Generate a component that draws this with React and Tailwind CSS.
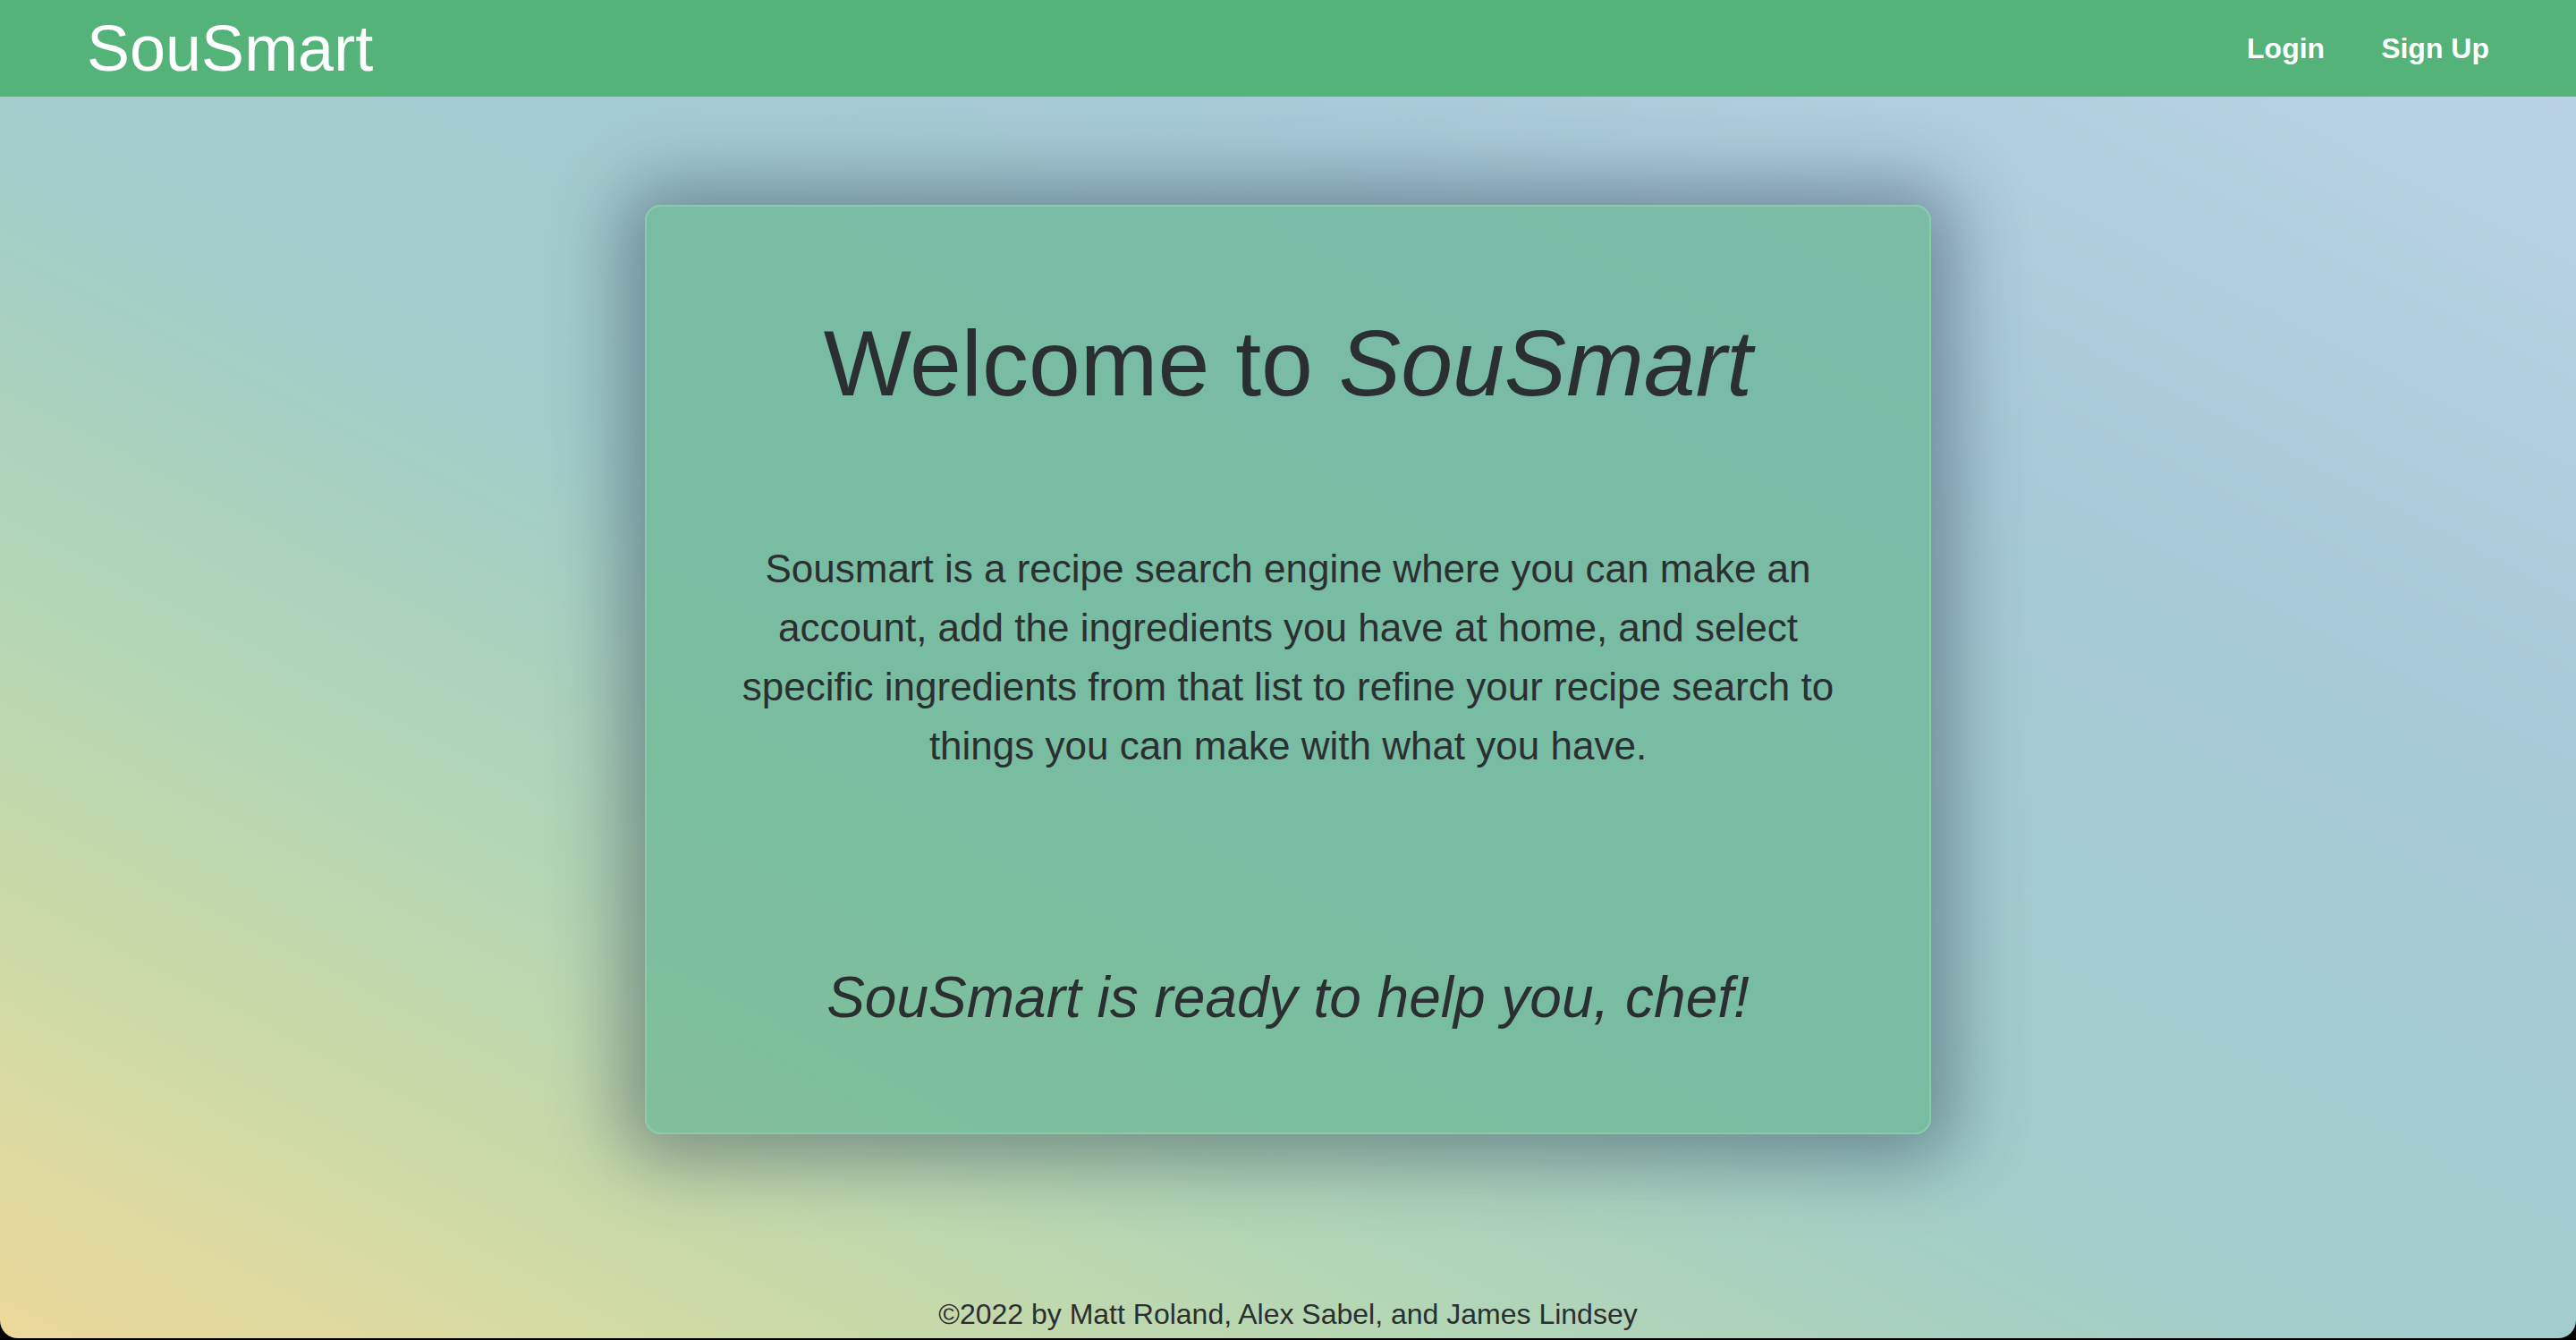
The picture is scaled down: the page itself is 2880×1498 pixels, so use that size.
export default function App() {
  return (
    <div className="h-[1498px] bg-black font-['Liberation_Sans',Arial,sans-serif]">
      <div className="flex h-[1496px] flex-col overflow-hidden rounded-b-[20px] bg-[linear-gradient(to_top_right,#edd89b_0%,#d3dba3_12%,#b3d6b4_28%,#a2cdca_45%,#a7c9d8_70%,#bbd4e7_100%)]">
        {/* Navbar */}
        <nav className="flex h-[108px] shrink-0 items-center justify-between bg-[#53b379] pl-[97px] pr-[97px]">
          <a className="text-[72px] leading-[72px] text-white">SouSmart</a>
          <div className="flex items-center gap-[63px] text-[32px] font-bold text-white">
            <a>Login</a>
            <a>Sign Up</a>
          </div>
        </nav>

        {/* Main card */}
        <main className="pt-[121px]">
          <div className="mx-auto box-border flex h-[1039px] w-[1438px] flex-col items-center rounded-[18px] border-2 border-[#88cba9] bg-[rgba(104,181,147,0.72)] pt-[113px] text-[#2b2f31] shadow-[0_4px_80px_26px_rgba(40,60,80,0.45)]">
            <h1 className="text-[104px] leading-[125px]">
              Welcome to <em>SouSmart</em>
            </h1>
            <p className="mt-[134px] max-w-[1250px] text-center text-[44px] leading-[66px]">
              Sousmart is a recipe search engine where you can make an account, add the ingredients you have at
              home, and select specific ingredients from that list to refine your recipe search to things you can
              make with what you have.
            </p>
            <p className="mt-[210px] text-[64px] italic leading-[77px]">SouSmart is ready to help you, chef!</p>
          </div>
        </main>

        <div className="flex-1" />

        {/* Footer */}
        <footer className="pb-[3px] text-center text-[32px] leading-[48px] text-[#2b2f31]">
          ©2022 by Matt Roland, Alex Sabel, and James Lindsey
        </footer>
      </div>
    </div>
  )
}
